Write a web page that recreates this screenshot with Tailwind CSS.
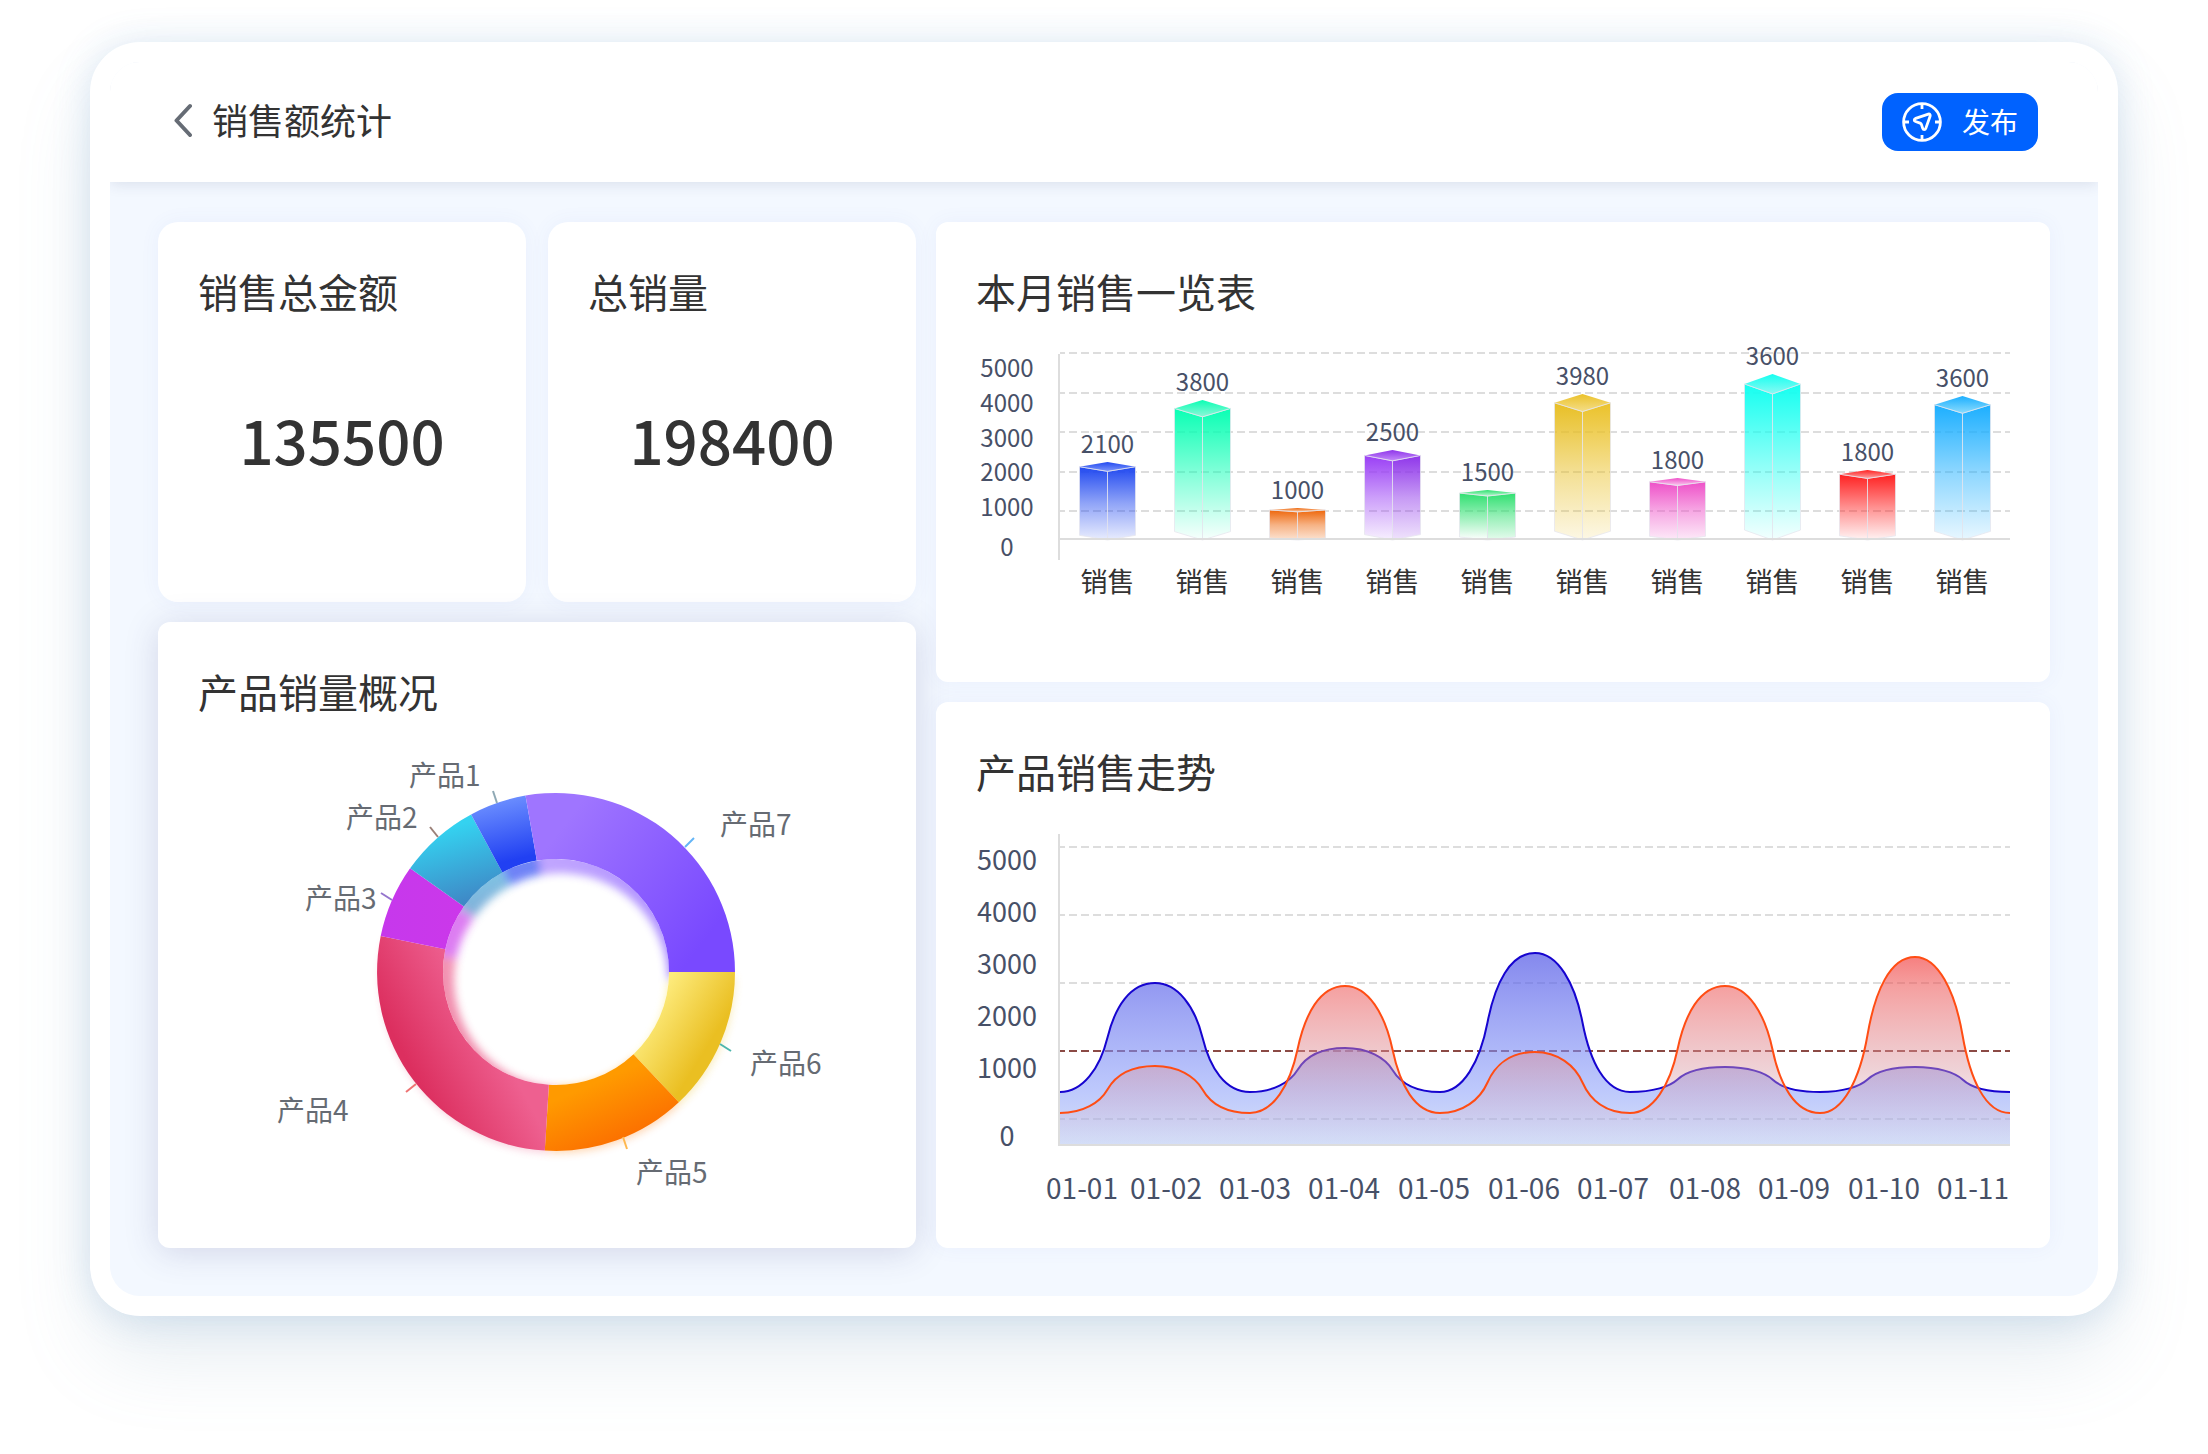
<!DOCTYPE html>
<html lang="zh-CN">
<head>
<meta charset="utf-8">
<meta name="viewport" content="width=device-width, initial-scale=1">
<title>销售额统计</title>
<script src="https://cdn.jsdelivr.net/npm/@tailwindcss/browser@4"></script>
</head>
<body class="min-h-screen bg-white font-['Noto_Sans_CJK_SC',sans-serif] text-[#333333] px-[90px] pt-[42px] pb-[138px]">
<div class="rounded-[50px] bg-white p-5 shadow-[0_2px_36px_rgba(90,145,200,0.22),0_44px_80px_-6px_rgba(110,150,180,0.18)]">
  <div class="overflow-hidden rounded-[30px] bg-[#f3f8ff]">
    <header class="relative flex h-[120px] items-center justify-between bg-white pr-[60px] pl-16 shadow-[0_2px_14px_rgba(40,50,90,0.12)]">
      <div class="flex items-center gap-5 pb-1.5">
        <a href="#" aria-label="返回" class="block">
          <svg class="block h-9 w-[18px]" viewBox="0 0 18 36" fill="none" stroke="#666c75" stroke-width="4" stroke-linecap="round" stroke-linejoin="round"><path d="M16 5 2.5 19.5 16 34"/></svg>
        </a>
        <h1 class="text-4xl leading-[52px]">销售额统计</h1>
      </div>
      <button type="button" class="flex h-[58px] items-center gap-5 rounded-2xl bg-[#0062ff] px-5 text-[28px] leading-10 text-white">
        <svg class="h-10 w-10" viewBox="0 0 40 40" fill="none" stroke="currentColor" stroke-width="2.8" stroke-linecap="round" stroke-linejoin="round"><circle cx="20" cy="20" r="18.4"/><path stroke-linecap="butt" d="M20 2v5M20 33v5M2 20h5M33 20h5"/><path d="M26.3 12.1 13.7 16.4c-1.900.700-1.900 2.500-.2 3.100l4.600 1.600c.700.300 1 .700 1.300 1.300l1.300 4c.600 1.800 2.500 1.700 3.100 0L28.100 14.200c.500-1.500-.400-2.500-1.800-2.100z"/></svg>
        <span class="pb-0.5">发布</span>
      </button>
    </header>

    <main class="grid grid-cols-[758fr_1114fr] gap-5 px-12 pt-10 pb-12">
      <div class="flex flex-col gap-5">
        <div class="grid grid-cols-2 gap-[22px]">
          <section class="min-h-[380px] rounded-[20px] bg-white p-10 shadow-[0_0_20px_rgba(90,100,220,0.06)]">
            <h2 class="text-[40px] leading-[58px]">销售总金额</h2>
            <p class="mt-[75px] text-center text-6xl leading-[88px] font-medium">135500</p>
          </section>
          <section class="min-h-[380px] rounded-[20px] bg-white p-10 shadow-[0_0_20px_rgba(90,100,220,0.06)]">
            <h2 class="text-[40px] leading-[58px]">总销量</h2>
            <p class="mt-[75px] text-center text-6xl leading-[88px] font-medium">198400</p>
          </section>
        </div>
        <section class="rounded-xl bg-white p-10 shadow-[0_4px_34px_rgba(60,60,130,0.18)]">
          <h2 class="text-[40px] leading-[58px]">产品销量概况</h2>
          <svg id="pie" class="block h-auto w-full" viewBox="198 720 678 488" role="img" aria-label="产品销量概况">
            <defs>
              <linearGradient id="s1" gradientUnits="userSpaceOnUse" x1="490" y1="800" x2="504" y2="862"><stop stop-color="#6d90ff"/><stop offset="1" stop-color="#2140f2"/></linearGradient>
              <linearGradient id="s2" gradientUnits="userSpaceOnUse" x1="440" y1="830" x2="461" y2="904"><stop stop-color="#34d2f0"/><stop offset="1" stop-color="#3f88c6"/></linearGradient>
              <linearGradient id="s3" gradientUnits="userSpaceOnUse" x1="380" y1="900" x2="460" y2="900"><stop stop-color="#c638ec"/><stop offset="1" stop-color="#cb38ea"/></linearGradient>
              <linearGradient id="s4" gradientUnits="userSpaceOnUse" x1="408" y1="1062" x2="486" y2="1021"><stop stop-color="#dc2f5f"/><stop offset="1" stop-color="#ee6090"/></linearGradient>
              <linearGradient id="s5" gradientUnits="userSpaceOnUse" x1="588" y1="1086" x2="616" y2="1150"><stop stop-color="#ff9a00"/><stop offset="1" stop-color="#fb6c00"/></linearGradient>
              <linearGradient id="s6" gradientUnits="userSpaceOnUse" x1="656" y1="1000" x2="714" y2="1036"><stop stop-color="#fdeb7c"/><stop offset="1" stop-color="#eabf22"/></linearGradient>
              <linearGradient id="s7" gradientUnits="userSpaceOnUse" x1="560" y1="830" x2="705" y2="940"><stop stop-color="#9f75ff"/><stop offset="1" stop-color="#7949ff"/></linearGradient>
              <clipPath id="hole"><circle cx="556" cy="972" r="113"/></clipPath>
              <filter id="soft" x="-10%" y="-10%" width="120%" height="120%"><feGaussianBlur stdDeviation="4.500"/></filter>
            </defs>
          </svg>
        </section>
      </div>

      <div class="flex flex-col gap-5">
        <section class="rounded-xl bg-white p-10 shadow-[0_0_20px_rgba(90,100,220,0.06)]">
          <h2 class="text-[40px] leading-[58px]">本月销售一览表</h2>
          <svg id="bars" class="block h-auto w-full" viewBox="976 320 1034 322" role="img" aria-label="本月销售一览表"></svg>
        </section>
        <section class="rounded-xl bg-white p-10 shadow-[0_0_20px_rgba(90,100,220,0.06)]">
          <h2 class="text-[40px] leading-[58px]">产品销售走势</h2>
          <svg id="trend" class="block h-auto w-full" viewBox="976 800 1034 408" role="img" aria-label="产品销售走势">
            <defs>
              <linearGradient id="blueArea" gradientUnits="userSpaceOnUse" x1="0" y1="953" x2="0" y2="1145"><stop stop-color="rgb(80,85,230)" stop-opacity=".7"/><stop offset=".72" stop-color="rgb(140,160,250)" stop-opacity=".57"/><stop offset="1" stop-color="rgb(170,190,240)" stop-opacity=".5"/></linearGradient>
              <linearGradient id="redArea" gradientUnits="userSpaceOnUse" x1="0" y1="956" x2="0" y2="1145"><stop stop-color="rgb(240,40,40)" stop-opacity=".6"/><stop offset=".16" stop-color="rgb(237,82,82)" stop-opacity=".55"/><stop offset=".6" stop-color="rgb(218,154,164)" stop-opacity=".45"/><stop offset="1" stop-color="rgb(218,170,190)" stop-opacity="0"/></linearGradient>
            </defs>
          </svg>
        </section>
      </div>
    </main>
  </div>
</div>

<script>
const label = (x, y, text, size, color, anchor = 'middle') =>
  `<text x="${x}" y="${y}" font-size="${size}" fill="${color}" text-anchor="${anchor}">${text}</text>`;
const grid = (y, color) =>
  `<path d="M1060 ${y}H2010" stroke="${color}" stroke-width="2" stroke-dasharray="8 4" stroke-dashoffset="3"/>`;
const ink = '#475067';

/* Donut */
const cx = 556, cy = 972;
const at = (r, deg) => [cx + r * Math.cos(deg * Math.PI / 180), cy + r * Math.sin(deg * Math.PI / 180)].map(v => v.toFixed(1)).join(' ');
const slice = (a, b, fill, r0, r1) => {
  const big = b - a > 180 ? 1 : 0;
  return `<path fill="${fill}" d="M${at(r1, a)}A${r1} ${r1} 0 ${big} 1 ${at(r1, b)}L${at(r0, b)}A${r0} ${r0} 0 ${big} 0 ${at(r0, a)}Z"/>`;
};
const slices = [
  [0, 46.7, 's6'], [46.7, 93.6, 's5'], [93.6, 191.6, 's4'], [191.6, 215.4, 's3'],
  [215.4, 241.7, 's2'], [241.7, 260.2, 's1'], [260.2, 360, 's7'],
];
const ring = (r0, r1) => slices.map(([a, b, id]) => slice(a, b, `url(#${id})`, r0, r1)).join('');
const lowerGlow = slices.slice(0, 3).map(([a, b, id]) => slice(a, b, `url(#${id})`, 150, 177)).join('');
const pieLabels = [
  [409, 786, '产品1', 'M497 803 493 791', '#8ea8b4'],
  [346, 828, '产品2', 'M438 837 430 827', '#9b8078'],
  [305, 909, '产品3', 'M392 900 381 893', '#9575cd'],
  [277, 1121, '产品4', 'M416 1084 406 1092', '#ee7373'],
  [636, 1183, '产品5', 'M623 1137 627 1149', '#ffb74d'],
  [750, 1074, '产品6', 'M720 1044 731 1051', '#4db6ac'],
  [720, 835, '产品7', 'M685 847 694 838', '#64b5f6'],
];
document.getElementById('pie').insertAdjacentHTML('beforeend',
  `<g filter="url(#soft)" opacity=".3" transform="translate(2 4)">${lowerGlow}</g>
   <circle cx="${cx}" cy="${cy}" r="114" fill="#fff"/>
   <g clip-path="url(#hole)"><g filter="url(#soft)" opacity=".65" transform="translate(5 8)">${ring(107, 140)}</g></g>
   ${ring(113, 179)}` +
  pieLabels.map(([x, y, t, d, c]) => `<path d="${d}" stroke="${c}" stroke-width="2"/>` + label(x, y, t, 28, '#666b73', 'start')).join(''));

/* Prism bars */
const bars = [
  [2100, 462, '#2149f0', '#2149f0', '#7f97fb', .1],
  [3800, 400, '#0affb4', '#0affb4', '#8df7d8', .03],
  [1000, 508, '#ee660a', '#ee660a', '#fbd0b0', .18],
  [2500, 450, '#9a3ff5', '#8f36ea', '#c48bf9', .14],
  [1500, 490, '#2fe070', '#2fe070', '#b8f7cf', .12],
  [3980, 394, '#e8bf25', '#ebc22a', '#f4dd88', .12],
  [1800, 478, '#ee50c8', '#ee50c8', '#fbc6ee', .12],
  [3600, 374, '#15fff0', '#15fff0', '#8afaf3', .05],
  [1800, 470, '#ff2020', '#ff2020', '#fda5a5', .05],
  [3600, 396, '#1cafff', '#1cafff', '#8bdcfd', .1],
];
let out = [353, 393, 432, 472, 511].map(y => grid(y, '#dddddd')).join('');
bars.forEach(([value, top, left, right, lid, fade], i) => {
  const c = 1107.5 + 95 * i, k = (540 - top) * .06, l = c - 28, r = c + 28;
  const fadeL = i === 3 ? .08 : i === 4 ? 0 : fade;
  const g = (id, col, a) => `<linearGradient id="${id}" x1="0" y1="0" x2="0" y2="1"><stop stop-color="${col}"/><stop offset=".5" stop-color="${col}" stop-opacity=".5"/><stop offset="1" stop-color="${col}" stop-opacity="${a}"/></linearGradient>`;
  out += `<defs>${g('bl' + i, left, fadeL)}${g('br' + i, right, fade)}<linearGradient id="bt${i}" x1="0" y1="0" x2="0" y2="1"><stop stop-color="${right}"/><stop offset="1" stop-color="${lid}"/></linearGradient></defs>
  <g stroke="#e6e6ee" stroke-opacity=".75" stroke-width="1">
  <path fill="url(#bl${i})" d="M${l} ${top + k}L${c} ${top + 2 * k}V540L${l} ${540 - k}Z"/>
  <path fill="url(#br${i})" d="M${r} ${top + k}L${c} ${top + 2 * k}V540L${r} ${540 - k}Z"/>
  <path fill="url(#bt${i})" stroke="none" d="M${c} ${top}L${r} ${top + k}L${c} ${top + 2 * k}L${l} ${top + k}Z"/>
  <path fill="none" d="M${r} ${top + k}L${c} ${top + 2 * k}L${l} ${top + k}"/></g>`;
  out += label(c, top - 9, value, 24, ink) + label(c, 592, '销售', 27, '#333333');
});
out += '<path d="M1059 354V560M1059 539H2010" stroke="#dddddd" stroke-width="2" fill="none"/>';
[[5000, 377], [4000, 412], [3000, 447], [2000, 481], [1000, 516], [0, 556]].forEach(([t, y]) => {
  out += label(1007, y, t, 24, ink);
});
document.getElementById('bars').innerHTML = out;

/* Trend curves: every point is a crest or a trough, 95 units apart */
const wave = ys => ys.slice(1).reduce((d, y, i) => {
  const x = 1060 + 95 * i, p = ys[i], m = (p + y) / 2, q = (y - p) / 2 * .56;
  return d + `C${x + 23} ${p} ${x + 40} ${m - q} ${x + 47.5} ${m}S${x + 70} ${y} ${x + 95} ${y}`;
}, `M1060 ${ys[0]}`);
const blue = wave([1092, 983, 1092, 1048, 1092, 953, 1092, 1067, 1092, 1067, 1092]);
const red = wave([1113, 1066, 1113, 986, 1113, 1052, 1113, 986, 1113, 957, 1113]);
let t = [847, 915, 983, 1119].map(y => grid(y, '#dddddd')).join('') + grid(1051, '#8b4a45');
t += '<path d="M1059 834V1146M1059 1145H2010" stroke="#dddddd" stroke-width="2" fill="none"/>';
t += `<path d="${blue}V1144H1060Z" fill="url(#blueArea)"/><path d="${blue}" fill="none" stroke="#1604cf" stroke-width="2"/>`;
t += `<path d="${red}V1144H1060Z" fill="url(#redArea)"/><path d="${red}" fill="none" stroke="#ff4d14" stroke-width="2"/>`;
[[5000, 870], [4000, 922], [3000, 974], [2000, 1026], [1000, 1078], [0, 1146]].forEach(([v, y]) => {
  t += label(1007, y, v, 27, ink);
});
[1082, 1166, 1255, 1344, 1434, 1524, 1613, 1705, 1794, 1884, 1973].forEach((x, i) => {
  t += label(x, 1199, '01-' + String(i + 1).padStart(2, '0'), 28, ink);
});
document.getElementById('trend').insertAdjacentHTML('beforeend', t);
</script>
</body>
</html>
